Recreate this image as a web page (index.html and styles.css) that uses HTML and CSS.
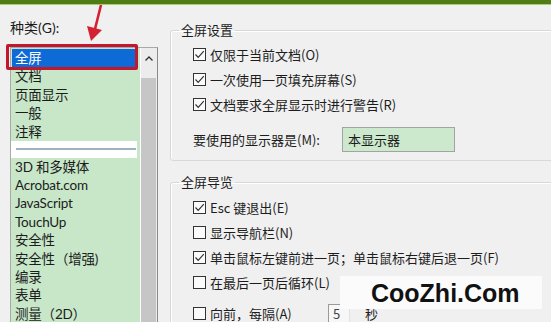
FILE: index.html
```html
<!DOCTYPE html>
<html>
<head>
	<title>全屏模式首选项</title>
	<meta charset="utf-8">
	<link rel="stylesheet" href="styles.css">
</head>
<body>
	<!--window top edge-->
	<div class="titlebar"></div>

	<div class="dialog">
		<!--category list-->
		<div class="category">
			<div class="cat-label">种类(G):</div>
			<div class="listbox">
				<ul class="items">
					<li class="selected">全屏</li>
					<li>文档</li>
					<li>页面显示</li>
					<li>一般</li>
					<li>注释</li>
					<li class="sep"></li>
					<li>3D 和多媒体</li>
					<li>Acrobat.com</li>
					<li>JavaScript</li>
					<li>TouchUp</li>
					<li>安全性</li>
					<li>安全性（增强)</li>
					<li>编录</li>
					<li>表单</li>
					<li>测量（2D）</li>
				</ul>
				<div class="scrollbar">
					<div class="scroll-btn">
						<svg width="8" height="5" viewBox="0 0 8 5"><path d="M0.5 4.5 L4 1 L7.5 4.5" fill="none" stroke="#333" stroke-width="1.3"/></svg>
					</div>
					<div class="thumb"></div>
				</div>
			</div>
		</div>

		<!--settings panel-->
		<div class="settings">
			<fieldset class="group first">
				<legend>全屏设置</legend>
				<label class="row"><span class="check on"><svg width="11" height="11" viewBox="0 0 11 11"><path d="M1.5 5.5 L4.2 8.3 L9.8 2.2" fill="none" stroke="#333" stroke-width="1.2"/></svg></span>仅限于当前文档(O)</label>
				<label class="row"><span class="check on"><svg width="11" height="11" viewBox="0 0 11 11"><path d="M1.5 5.5 L4.2 8.3 L9.8 2.2" fill="none" stroke="#333" stroke-width="1.2"/></svg></span>一次使用一页填充屏幕(S)</label>
				<label class="row"><span class="check on"><svg width="11" height="11" viewBox="0 0 11 11"><path d="M1.5 5.5 L4.2 8.3 L9.8 2.2" fill="none" stroke="#333" stroke-width="1.2"/></svg></span>文档要求全屏显示时进行警告(R)</label>
				<div class="monitor">
					<span class="monitor-label">要使用的显示器是(M):</span>
					<span class="combo">本显示器</span>
				</div>
			</fieldset>

			<fieldset class="group second">
				<legend>全屏导览</legend>
				<label class="row"><span class="check on"><svg width="11" height="11" viewBox="0 0 11 11"><path d="M1.5 5.5 L4.2 8.3 L9.8 2.2" fill="none" stroke="#333" stroke-width="1.2"/></svg></span>Esc 键退出(E)</label>
				<label class="row"><span class="check"></span>显示导航栏(N)</label>
				<label class="row"><span class="check on"><svg width="11" height="11" viewBox="0 0 11 11"><path d="M1.5 5.5 L4.2 8.3 L9.8 2.2" fill="none" stroke="#333" stroke-width="1.2"/></svg></span>单击鼠标左键前进一页；单击鼠标右键后退一页(F)</label>
				<label class="row"><span class="check"></span>在最后一页后循环(L)</label>
				<div class="row last">
					<span class="check"></span>
					<span class="advance">向前，每隔(A)</span>
					<span class="spin">5</span>
					<span class="unit">秒</span>
				</div>
			</fieldset>
		</div>
	</div>

	<!--annotation over the list-->
	<div class="highlight"></div>
	<svg class="pointer" width="30" height="50" viewBox="80 0 30 50">
		<line x1="101" y1="5" x2="95" y2="29" stroke="#d42030" stroke-width="2.6"/>
		<polygon points="87,26 102,30 91,41" fill="#d42030"/>
	</svg>

	<div class="watermark">CooZhi.Com</div>
</body>
</html>
```
FILE: styles.css
```css
html, body{
	height: 322px;
	overflow: hidden;
}

body{
	margin: 0;
	position: relative;
	background: #f0f0f0;
	color: #1c1c1c;
	font-family: "Noto Sans CJK SC", "Noto Sans", sans-serif;
	font-size: 13px;
}

.titlebar{
	height: 4px;
	background: #4f7d14;
	border-bottom: 1px solid #a9cb78;
}

.dialog{
	display: flex;
}

/* left column */
.category{
	width: 170px;
	flex: none;
	padding-left: 10px;
	box-sizing: border-box;
	font-family: Lato, "Noto Sans CJK SC", sans-serif;
}

.cat-label{
	margin-top: 15px;
	font-size: 14px;
	line-height: 16px;
}

.listbox{
	display: flex;
	margin-top: 11px;
	width: 148px;
	height: 290px;
	border: 1px solid #a9a9a9;
	border-right-color: #8a8a8a;
	box-sizing: border-box;
}

.items{
	list-style: none;
	margin: 0;
	padding: 1px 0 0;
	width: 129px;
	background: #c8e7c9;
	font-size: 13.5px;
}

.items li{
	height: 18.4px;
	line-height: 18.4px;
	padding-left: 4px;
	white-space: nowrap;
	letter-spacing: -0.2px;
}

.items li.selected{
	background: #0e6ad6;
	color: #fff;
	margin: 0 4px 0 1px;
	padding-left: 3px;
}

.items li.sep{
	height: 16.6px;
	background: #fff;
	margin-right: 3px;
	padding: 0 1px 0 5px;
	display: flex;
	align-items: center;
}

.items li.sep::after{
	content: "";
	flex: 1;
	height: 2px;
	background: #9cb3c4;
}

.scrollbar{
	width: 17px;
	border-left: 1px solid #fff;
	background: #ececec;
	box-sizing: border-box;
}

.scroll-btn{
	height: 22px;
	display: flex;
	justify-content: center;
	padding-top: 8px;
	box-sizing: border-box;
}

.thumb{
	margin-top: 8px;
	width: 15px;
	height: 260px;
	background: #c6c6c6;
}

/* right column */
.settings{
	width: 420px;
	flex: none;
}

.group{
	margin: 0;
	padding: 0 0 8px 8px;
	border: 1px solid #d8d8d8;
	border-radius: 3px;
	box-shadow: inset 1px 1px 0 #fff;
	min-width: 0;
}

.group legend{
	padding: 0 2px;
	line-height: 18px;
}

.group.first{
	margin-top: 16px;
}

.group.second{
	margin-top: 12px;
}

.row{
	display: flex;
	align-items: center;
	height: 25px;
	padding-left: 14px;
	white-space: nowrap;
}

.group.first .row:first-of-type{
	margin-top: 3px;
}

.group.second .row:first-of-type{
	margin-top: 4px;
}

.check{
	width: 13px;
	height: 13px;
	flex: none;
	box-sizing: border-box;
	border: 1px solid #333;
	background: #fbfbfb;
	margin-right: 4px;
	display: flex;
	align-items: center;
	justify-content: center;
}

.monitor{
	display: flex;
	align-items: center;
	height: 25px;
	margin-top: 10px;
	padding-left: 14px;
}

.monitor-label{
	width: 149px;
}

.combo{
	width: 113px;
	height: 25px;
	line-height: 23px;
	box-sizing: border-box;
	padding-left: 5px;
	border: 1px solid #a3a3a3;
	background: #cce8cd;
}

.row.last{
	margin-top: 8px;
	align-items: flex-start;
	padding-top: 8px;
	box-sizing: border-box;
}

.row.last .advance{
	width: 118px;
	line-height: 13px;
}

.spin{
	width: 22px;
	height: 20px;
	margin-top: -3px;
	box-sizing: border-box;
	border: 1px solid #9a9a9a;
	border-right-color: #e2e2e2;
	border-bottom: none;
	padding-left: 4px;
	line-height: 18px;
	color: #444;
	background: #f7f7f7;
}

.unit{
	margin-left: 15px;
	line-height: 13px;
}

/* annotation overlays */
.highlight{
	position: absolute;
	left: 6px;
	top: 44px;
	width: 132px;
	height: 26px;
	box-sizing: border-box;
	border: 3px solid #c2172c;
	border-radius: 2px;
}

.pointer{
	position: absolute;
	left: 80px;
	top: 0;
}

.watermark{
	position: absolute;
	left: 340px;
	top: 276px;
	width: 202px;
	height: 33px;
	line-height: 34px;
	padding-left: 31px;
	box-sizing: border-box;
	background: #fbfbfb;
	color: #111;
	font-family: "Liberation Sans", Arial, sans-serif;
	font-weight: bold;
	font-size: 25px;
}
```
